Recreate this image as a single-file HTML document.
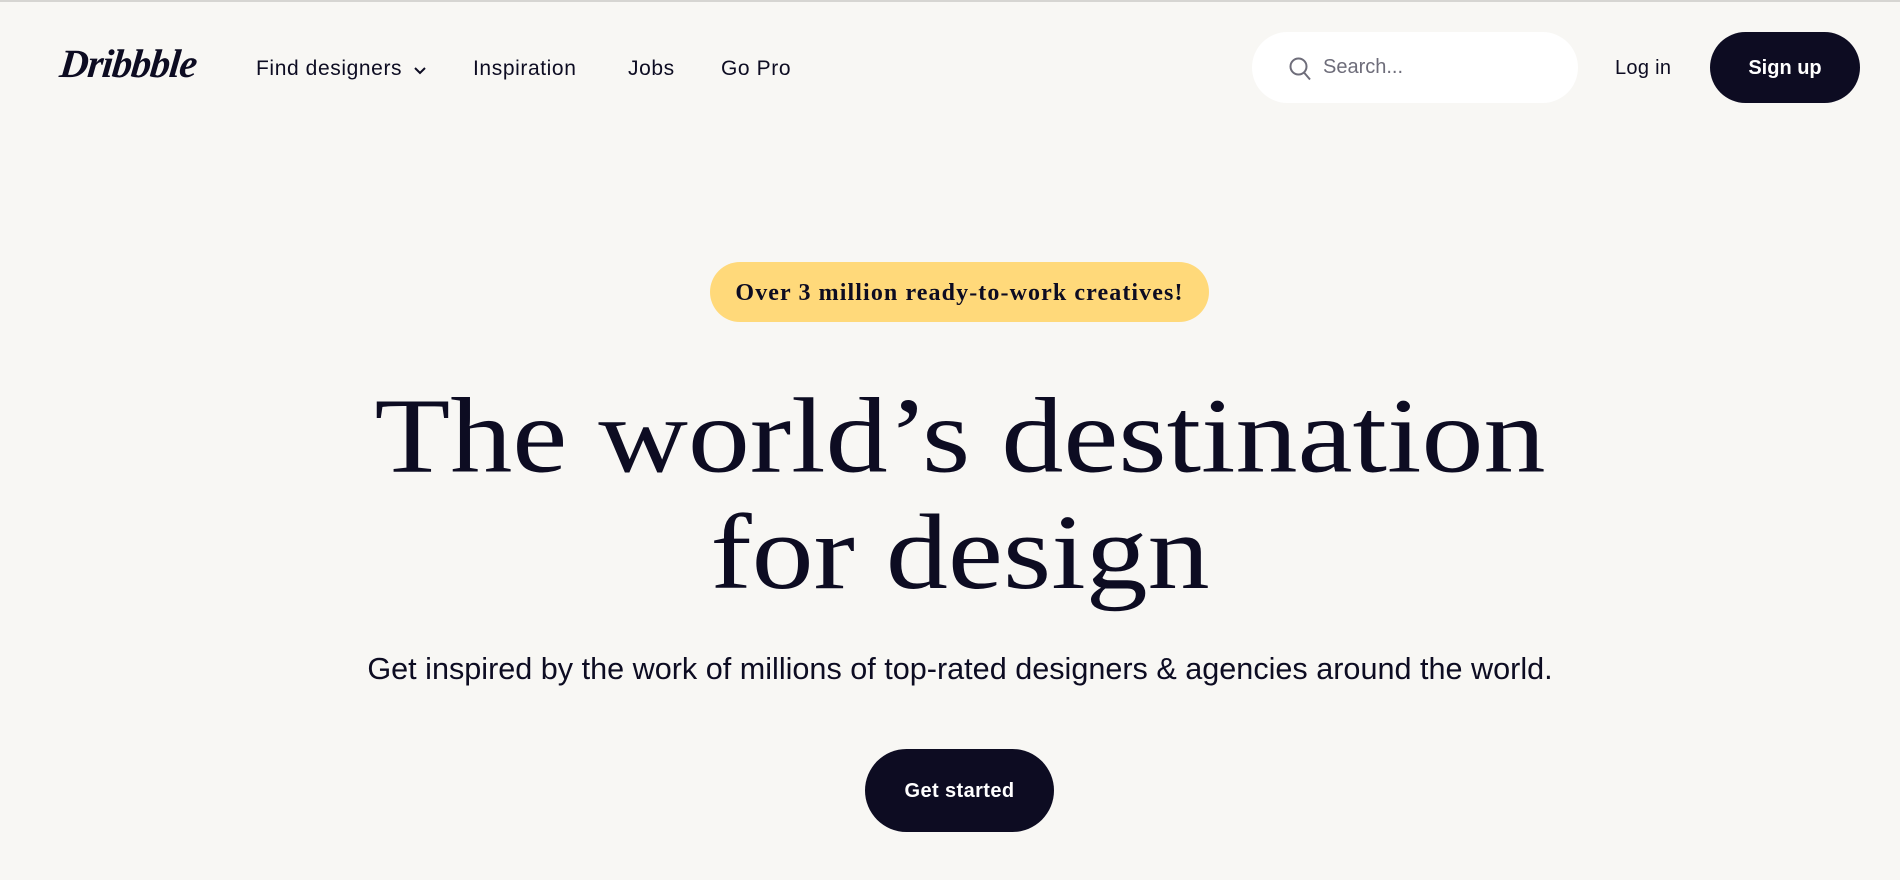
<!DOCTYPE html>
<html><head><meta charset="utf-8"><style>
*{margin:0;padding:0;box-sizing:border-box}
html,body{width:1900px;height:880px;overflow:hidden;background:#f8f7f4;color:#0d0c22;font-family:"Liberation Sans",sans-serif}
.top{position:absolute;left:0;top:0;width:1900px;height:2px;background:#d6d5d2}
.logo{position:absolute;left:60px;top:40px;font-family:"Liberation Serif",serif;font-style:italic;font-weight:bold;font-size:40px;letter-spacing:-1px;transform:skewX(-6deg)}
.nav{position:absolute;top:57px;font-size:21px;letter-spacing:0.6px;line-height:24px;color:#0d0c22}
.search{position:absolute;left:1252px;top:32px;width:326px;height:71px;border-radius:36px;background:#fff}
.search span{position:absolute;left:71px;top:24px;font-size:20px;color:#6e6d7a}
.search svg{position:absolute;left:36px;top:24px}
.login{position:absolute;left:1615px;top:57px;font-size:20px;letter-spacing:0.3px}
.signup{position:absolute;left:1710px;top:32px;width:150px;height:71px;border-radius:36px;background:#0d0c22;color:#fff;font-weight:bold;font-size:20px;text-align:center;line-height:73px}
.badge{position:absolute;left:710px;top:262px;width:499px;height:60px;border-radius:30px;background:#ffd97a;font-family:"Liberation Serif",serif;font-weight:bold;font-size:24px;letter-spacing:1.1px;text-align:center;line-height:62px}
h1{position:absolute;left:10px;top:378px;width:1900px;text-align:center;font-family:"Liberation Serif",serif;font-weight:normal;font-size:124px;line-height:135px;color:#0d0c22;transform:scaleY(0.86);transform-origin:top}
.sub{position:absolute;left:10px;top:652px;width:1900px;text-align:center;font-size:30.6px;color:#0d0c22}
.btn{position:absolute;left:865px;top:749px;width:189px;height:83px;border-radius:42px;background:#0d0c22;color:#fff;font-weight:bold;font-size:20px;letter-spacing:0.4px;text-align:center;line-height:85px}
</style></head><body>
<div class="top"></div>
<div class="logo">Dribbble</div>
<div class="nav" style="left:256px">Find designers <svg width="14" height="10" viewBox="0 0 14 10" style="margin-left:4px"><path d="M2 3l5 5 5-5" fill="none" stroke="#0d0c22" stroke-width="2"/></svg></div>
<div class="nav" style="left:473px">Inspiration</div>
<div class="nav" style="left:628px">Jobs</div>
<div class="nav" style="left:721px">Go Pro</div>
<div class="search"><svg width="24" height="26" viewBox="0 0 24 26"><circle cx="10.5" cy="10.5" r="8" fill="none" stroke="#6e6d7a" stroke-width="2"/><path d="M16 16.5l6 7" stroke="#6e6d7a" stroke-width="2"/></svg><span>Search...</span></div>
<div class="login">Log in</div>
<div class="signup">Sign up</div>
<div class="badge">Over 3 million ready-to-work creatives!</div>
<h1>The world’s destination<br>for design</h1>
<div class="sub">Get inspired by the work of millions of top-rated designers &amp; agencies around the world.</div>
<div class="btn">Get started</div>
</body></html>
